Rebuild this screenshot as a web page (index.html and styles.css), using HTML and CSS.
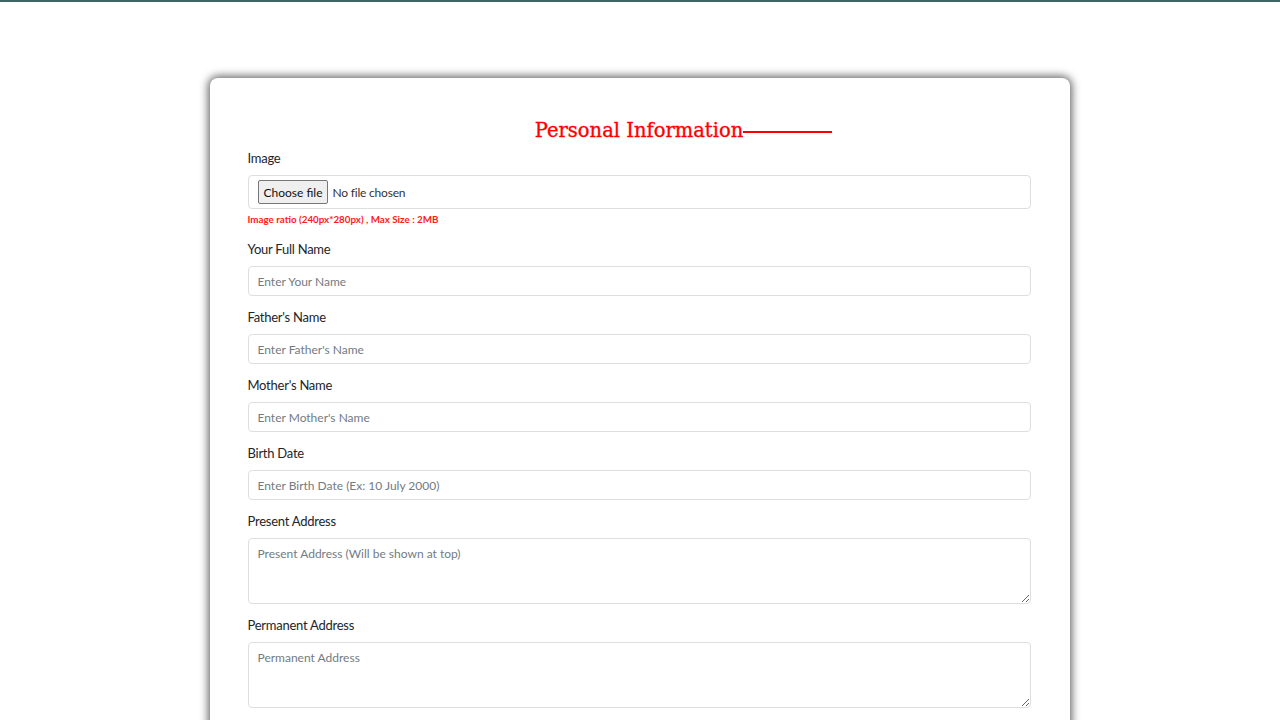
FILE: index.html
```html
<!DOCTYPE html>
<html>
<head>
<meta charset="utf-8">
<link rel="stylesheet" href="styles.css">
</head>
<body>
<div class="topbar"></div>
<main class="page">
  <section class="card">
    <h2 class="title"><span class="title-text">Personal Information</span></h2>
    <div class="group">
      <label class="label">Image</label>
      <div class="file-box">
        <button class="file-btn" type="button">Choose file</button>
        <span class="file-text">No file chosen</span>
      </div>
      <div class="hint">Image ratio (240px*280px) , Max Size : 2MB</div>
    </div>
    <div class="group">
      <label class="label">Your Full Name</label>
      <input class="field" type="text" placeholder="Enter Your Name">
    </div>
    <div class="group">
      <label class="label">Father's Name</label>
      <input class="field" type="text" placeholder="Enter Father's Name">
    </div>
    <div class="group">
      <label class="label">Mother's Name</label>
      <input class="field" type="text" placeholder="Enter Mother's Name">
    </div>
    <div class="group">
      <label class="label">Birth Date</label>
      <input class="field" type="text" placeholder="Enter Birth Date (Ex: 10 July 2000)">
    </div>
    <div class="group">
      <label class="label">Present Address</label>
      <textarea class="field area" placeholder="Present Address (Will be shown at top)"></textarea>
    </div>
    <div class="group">
      <label class="label">Permanent Address</label>
      <textarea class="field area" placeholder="Permanent Address"></textarea>
    </div>
  </section>
</main>
</body>
</html>
```
FILE: styles.css
```css
html, body {
  margin: 0;
  padding: 0;
  background: #ffffff;
  overflow: hidden;
  height: 720px;
}
body {
  font-family: Lato, "Open Sans", sans-serif;
  color: #212529;
}
.topbar {
  height: 2px;
  background: #3f6466;
}
.page {
  display: flex;
  justify-content: center;
  padding-top: 76px;
  padding-right: 1px;
}
.card {
  width: 860px;
  box-sizing: border-box;
  background: #fff;
  border-radius: 8px;
  box-shadow: 0 0 9px 2px rgba(0,0,0,0.6);
  padding: 39px 39px 40px 38px;
}
.title {
  margin: 0 0 3px 0;
  text-align: center;
  font-family: "DejaVu Serif", serif;
  font-weight: normal;
  font-size: 19.5px;
  line-height: 28px;
  color: #ff0000;
  -webkit-text-stroke: 0.35px #ff0000;
}
.title-text {
  position: relative;
}
.title-text::after {
  content: "";
  position: absolute;
  left: 100%;
  top: 12px;
  width: 89px;
  height: 2px;
  background: #ff0000;
}
.group {
  display: flex;
  flex-direction: column;
  margin-bottom: 11px;
}
.label {
  font-size: 13px;
  line-height: 20px;
  margin-bottom: 7px;
  letter-spacing: -0.25px;
  color: #212529;
}
.file-box {
  height: 34px;
  box-sizing: border-box;
  border: 1px solid #dcdfe2;
  border-radius: 4px;
  display: flex;
  align-items: center;
  padding-left: 9px;
}
.file-btn {
  font-family: Lato, "Open Sans", sans-serif;
  font-size: 12px;
  height: 24px;
  padding: 0 5px;
  background: #efefef;
  border: 1px solid #767676;
  border-radius: 2px;
  color: #111;
  margin-right: 4px;
}
.file-text {
  font-size: 12px;
  letter-spacing: -0.2px;
  color: #333;
}
.hint {
  margin-top: 3px;
  margin-bottom: 2px;
  font-size: 9.8px;
  line-height: 14px;
  font-weight: bold;
  color: #ff1a1a;
}
.field {
  height: 30px;
  box-sizing: border-box;
  border: 1px solid #dcdfe2;
  border-radius: 4px;
  padding: 0 9px;
  font-family: Lato, "Open Sans", sans-serif;
  font-size: 12px;
  color: #212529;
  outline: none;
}
.field::placeholder {
  color: #737b82;
}
.area {
  height: 66px;
  padding: 7px 9px;
  resize: vertical;
}
```
